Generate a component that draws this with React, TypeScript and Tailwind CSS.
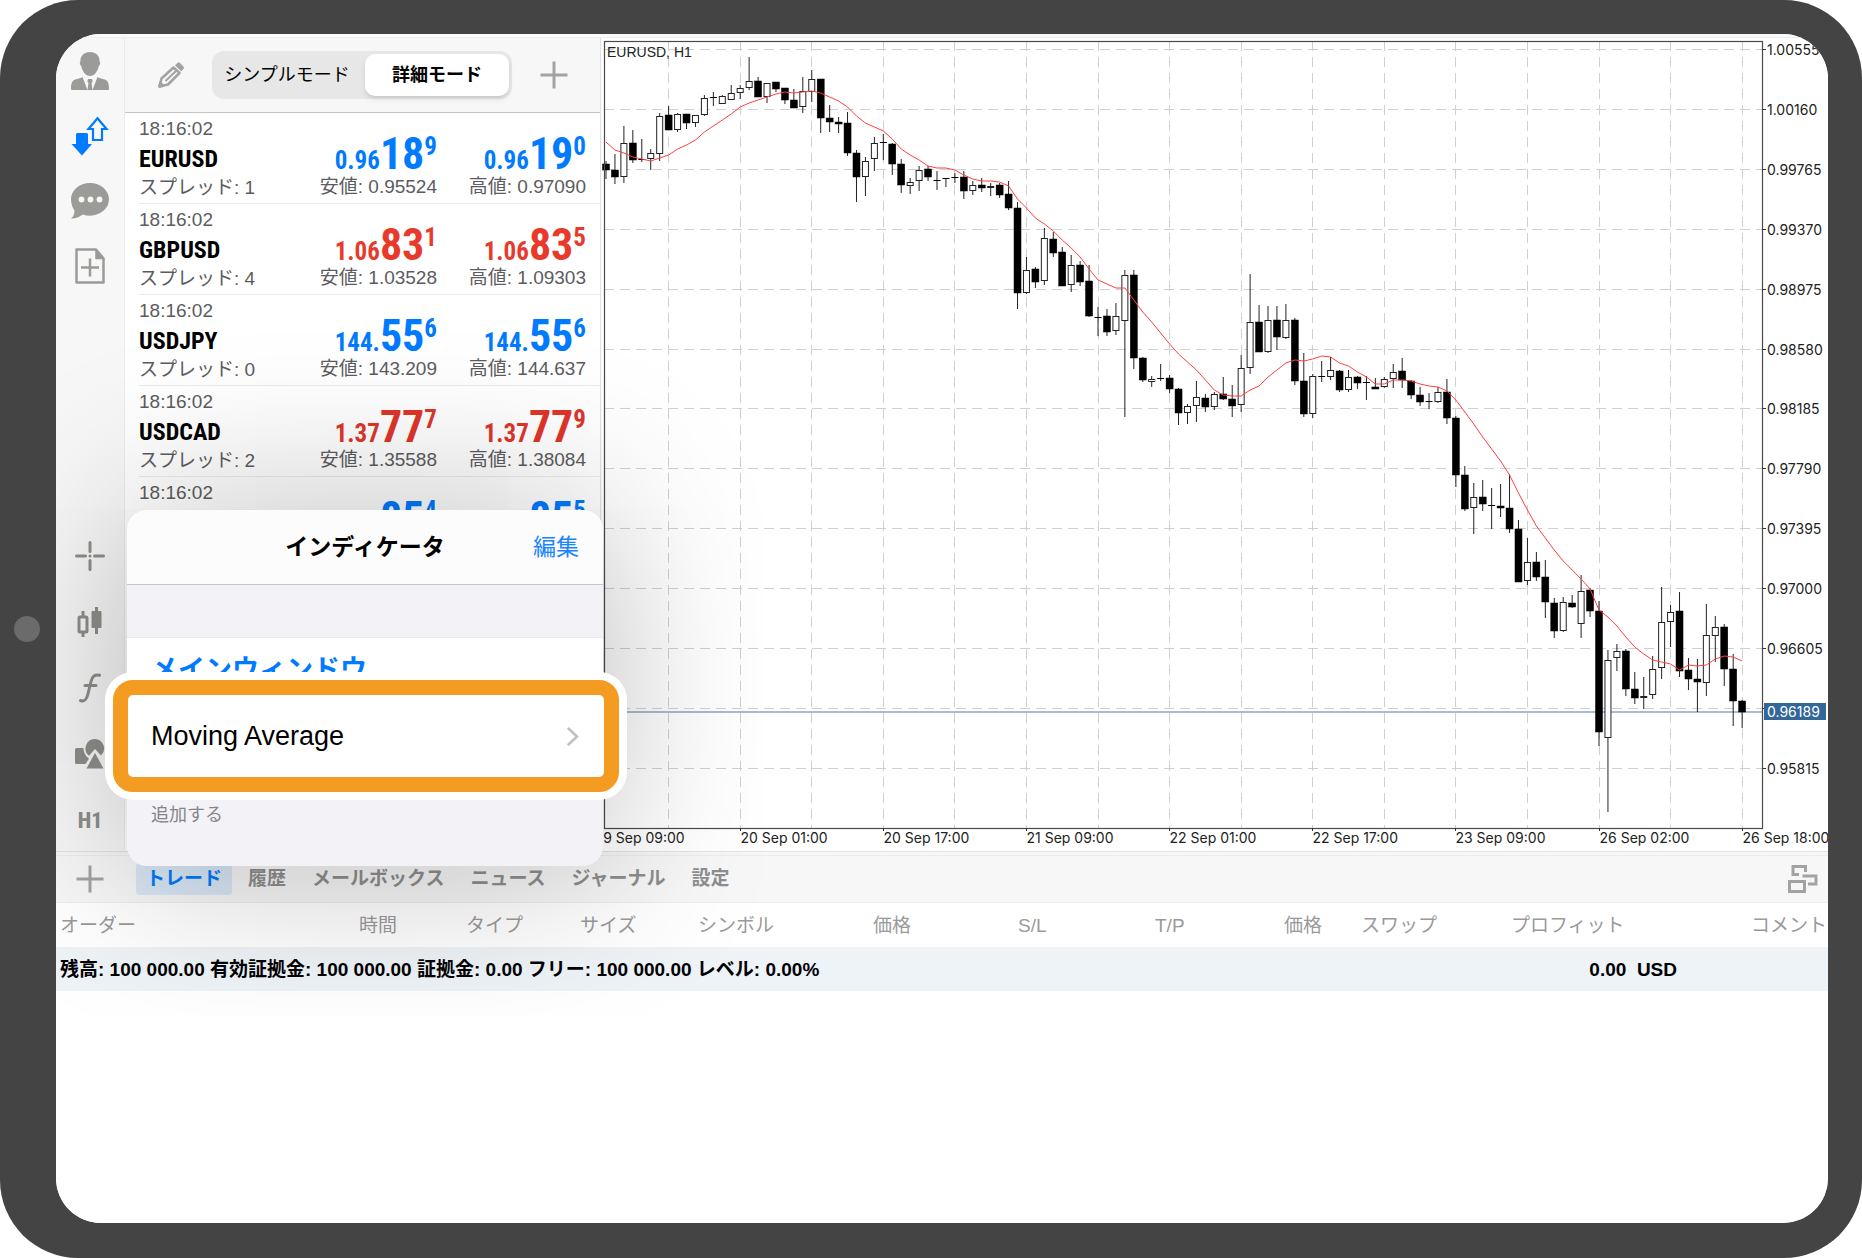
import type { ReactNode } from 'react';

type Candle = [high: number, top: number, bottom: number, low: number, up: number];

const STEP = 8.946;

// high, body top, body bottom, low, 1 = rising
const candles: Candle[] = [
  [120, 123, 129, 138, 0], [113, 129, 136, 143, 0], [85, 102, 136, 142, 1], [89, 102, 119, 122, 0],
  [98, 118, 119, 121, 0], [108, 112, 118, 129, 1], [72, 75, 113, 120, 1], [65, 74, 89, 89, 0],
  [72, 73, 89, 91, 1], [73, 73, 82, 88, 0], [74, 74, 82, 86, 1], [54, 57, 74, 75, 1],
  [51, 56, 57, 65, 0], [54, 55, 63, 63, 1], [44, 52, 59, 59, 1], [44, 47, 52, 58, 1],
  [16, 40, 47, 49, 1], [36, 40, 56, 56, 0], [42, 42, 56, 62, 1], [41, 41, 48, 51, 0],
  [47, 47, 59, 63, 0], [48, 59, 67, 67, 0], [36, 50, 66, 72, 1], [29, 38, 51, 61, 1],
  [38, 38, 77, 92, 0], [64, 77, 81, 91, 0], [76, 81, 83, 92, 0], [71, 82, 112, 115, 0],
  [109, 112, 136, 161, 0], [116, 120, 136, 155, 1], [96, 102, 118, 130, 1], [93, 101, 102, 119, 0],
  [102, 103, 123, 134, 0], [118, 123, 144, 152, 0], [137, 141, 145, 153, 1], [125, 129, 140, 150, 1],
  [125, 128, 136, 140, 0], [130, 139, 140, 149, 0], [137, 137, 138, 146, 0], [132, 136, 137, 142, 0],
  [130, 136, 150, 158, 0], [140, 144, 150, 154, 1], [137, 144, 147, 151, 0], [142, 145, 147, 155, 1],
  [142, 144, 154, 157, 0], [140, 153, 167, 169, 0], [161, 167, 252, 268, 0], [216, 229, 252, 253, 1],
  [226, 228, 241, 247, 0], [187, 197, 240, 244, 1], [191, 198, 212, 216, 0], [206, 211, 245, 245, 0],
  [214, 224, 244, 251, 1], [220, 224, 241, 245, 0], [224, 240, 275, 276, 0], [266, 276, 277, 295, 0],
  [268, 275, 291, 295, 0], [262, 275, 290, 294, 1], [229, 234, 280, 376, 1], [229, 234, 317, 328, 0],
  [316, 317, 339, 341, 0], [335, 338, 341, 346, 1], [323, 337, 338, 340, 0], [334, 337, 348, 352, 0],
  [347, 348, 372, 384, 0], [363, 365, 372, 383, 1], [340, 356, 365, 381, 1], [353, 357, 366, 371, 0],
  [351, 353, 366, 369, 1], [336, 353, 358, 359, 0], [344, 358, 365, 376, 0], [314, 327, 364, 371, 1],
  [233, 281, 327, 333, 1], [264, 281, 311, 311, 0], [265, 279, 311, 312, 1], [265, 279, 296, 309, 0],
  [263, 279, 297, 298, 1], [277, 279, 340, 344, 0], [312, 340, 373, 376, 0], [333, 335, 373, 377, 1],
  [320, 335, 336, 341, 0], [316, 329, 336, 339, 1], [329, 330, 349, 351, 0], [329, 336, 349, 351, 1],
  [335, 336, 342, 348, 0], [335, 341, 342, 359, 0], [337, 346, 348, 348, 0], [336, 338, 346, 347, 1],
  [323, 331, 338, 347, 1], [317, 330, 339, 347, 0], [339, 340, 354, 358, 0], [346, 354, 361, 365, 0],
  [352, 360, 361, 368, 0], [346, 351, 361, 362, 1], [338, 351, 377, 383, 0], [375, 377, 434, 446, 0],
  [425, 434, 468, 470, 0], [442, 456, 467, 493, 1], [439, 456, 463, 470, 0], [447, 464, 465, 488, 0],
  [443, 465, 467, 476, 0], [433, 467, 488, 492, 0], [479, 488, 541, 541, 0], [497, 521, 540, 544, 1],
  [511, 521, 536, 540, 0], [519, 536, 561, 577, 0], [557, 562, 590, 597, 0], [556, 561, 590, 591, 1],
  [554, 562, 566, 567, 0], [534, 550, 583, 597, 1], [547, 549, 570, 576, 0], [560, 570, 691, 705, 0],
  [609, 619, 697, 771, 1], [603, 610, 617, 630, 1], [608, 610, 648, 655, 0], [631, 648, 657, 663, 0],
  [636, 655, 657, 668, 1], [615, 628, 654, 658, 1], [546, 581, 627, 638, 1], [564, 571, 581, 606, 1],
  [551, 570, 630, 636, 0], [617, 629, 638, 649, 0], [618, 638, 641, 671, 0], [563, 594, 642, 655, 1],
  [575, 586, 595, 621, 1], [583, 586, 628, 645, 0], [613, 628, 660, 685, 0], [659, 660, 671, 687, 0],
];

const average = [
  101, 109, 112, 116, 118, 120, 117, 114, 108, 104, 99, 91, 85, 79, 73, 66,
  62, 59, 56, 53, 51, 52, 51, 50, 52, 56, 60, 66, 75, 82, 86, 90,
  98, 108, 114, 119, 125, 127, 127, 129, 134, 138, 140, 140, 141, 145, 158, 167,
  177, 183, 190, 199, 207, 216, 228, 239, 243, 247, 247, 259, 271, 281, 292, 303,
  313, 321, 329, 339, 349, 354, 355, 355, 349, 345, 336, 329, 322, 319, 320, 318,
  315, 316, 322, 325, 331, 336, 343, 343, 339, 339, 340, 343, 345, 346, 350, 359,
  371, 383, 396, 408, 420, 434, 452, 469, 485, 497, 509, 520, 529, 538, 548, 569,
  576, 585, 596, 606, 613, 619, 621, 623, 629, 624, 625, 624, 618, 615, 616, 620,
];

const priceLabels = [
  '1.00555', '1.00160', '0.99765', '0.99370', '0.98975', '0.98580', '0.98185',
  '0.97790', '0.97395', '0.97000', '0.96605', '', '0.95815',
];

const timeLabels = [
  '19 Sep 09:00', '20 Sep 01:00', '20 Sep 17:00', '21 Sep 09:00', '22 Sep 01:00',
  '22 Sep 17:00', '23 Sep 09:00', '26 Sep 02:00', '26 Sep 18:00',
];

const quotes = [
  { symbol: 'EURUSD', spread: 1, low: '0.95524', high: '0.97090', bid: ['0.96', '18', '9'], ask: ['0.96', '19', '0'], color: 'text-[#007aff]' },
  { symbol: 'GBPUSD', spread: 4, low: '1.03528', high: '1.09303', bid: ['1.06', '83', '1'], ask: ['1.06', '83', '5'], color: 'text-[#e8392a]' },
  { symbol: 'USDJPY', spread: 0, low: '143.209', high: '144.637', bid: ['144.', '55', '6'], ask: ['144.', '55', '6'], color: 'text-[#007aff]' },
  { symbol: 'USDCAD', spread: 2, low: '1.35588', high: '1.38084', bid: ['1.37', '77', '7'], ask: ['1.37', '77', '9'], color: 'text-[#e0352a]' },
  { symbol: 'EURGBP', spread: 1, low: '0.88412', high: '0.92685', bid: ['0.89', '85', '4'], ask: ['0.89', '85', '5'], color: 'text-[#007aff]' },
];

const tabs = ['トレード', '履歴', 'メールボックス', 'ニュース', 'ジャーナル', '設定'];

const columns = [
  { label: 'オーダー', width: 'w-[303px]' },
  { label: '時間', width: 'w-[107px]' },
  { label: 'タイプ', width: 'w-[114px]' },
  { label: 'サイズ', width: 'w-[118px]' },
  { label: 'シンボル', width: 'w-[175px]' },
  { label: '価格', width: 'w-[145px]' },
  { label: 'S/L', width: 'w-[137px]' },
  { label: 'T/P', width: 'w-[129px]' },
  { label: '価格', width: 'w-[77px]' },
  { label: 'スワップ', width: 'w-[150px]' },
  { label: 'プロフィット', width: 'w-[240px]' },
  { label: 'コメント', width: 'w-[77px]' },
];

function SideButton({ label, children }: { label: string; children: ReactNode }) {
  return (
    <button type="button" aria-label={label} className="flex items-center justify-center text-[#9b9b97]">
      {children}
    </button>
  );
}

function PlusIcon() {
  return (
    <svg width="28" height="28" viewBox="0 0 28 28" fill="none" stroke="currentColor" strokeWidth="3">
      <path d="M14 0.5v27M0.5 14h27" />
    </svg>
  );
}

function Sidebar() {
  return (
    <nav className="flex w-[69px] shrink-0 flex-col justify-between border-r border-[#ececec] bg-[#f7f7f7]">
      <div className="grid auto-rows-[65px]">
        <SideButton label="アカウント">
          <svg width="38" height="38" viewBox="0 0 38 38" fill="currentColor">
            <path d="M19 0c6 0 9.600 3.600 9.600 9.500 1 .5.700 3.500-.8 4.500-.8 5-4.500 10-8.800 10s-8-5-8.800-10c-1.500-1-1.800-4-.8-4.500C9.400 3.600 13 0 19 0z" />
            <path d="M11.500 25l5 13H1.500C.5 38 0 37.500 0 36.500c0-6 1.500-8 5-9.200 3-.9 5-1.100 6.500-2.300zM26.500 25l-5 13h15c1 0 1.500-.5 1.500-1.500 0-6-1.500-8-5-9.200-3-.9-5-1.100-6.500-2.300zM17 27h4l.7 2.500-1.200 1.500 1 7h-5l1-7-1.200-1.500z" />
          </svg>
        </SideButton>
        <SideButton label="気配値">
          <svg width="38" height="40" viewBox="0 0 38 40" className="text-[#007aff]">
            <path d="M26.500 2.200l9 10.800h-4.500v11h-9V13h-4.500z" fill="none" stroke="currentColor" strokeWidth="2.200" />
            <path d="M5 18.500q0-1.500 1.500-1.500h9q1.500 0 1.500 1.500V28h4L11 39.500 0.500 28H5z" fill="currentColor" />
          </svg>
        </SideButton>
        <SideButton label="メッセージ">
          <svg width="38" height="36" viewBox="0 0 38 36" fill="currentColor">
            <path d="M19 0c10.500 0 19 7.200 19 16.300s-8.500 16.400-19 16.400c-2.500 0-5-.4-7.200-1.200C9 34 4 35.700 0 35.500c2.500-2 3.500-4.500 3.500-8C1.300 24.500 0 20.500 0 16.300 0 7.200 8.500 0 19 0z" />
            <circle cx="10.500" cy="16.500" r="2.900" fill="#f7f7f7" />
            <circle cx="19.500" cy="16.500" r="2.900" fill="#f7f7f7" />
            <circle cx="28.500" cy="16.500" r="2.900" fill="#f7f7f7" />
          </svg>
        </SideButton>
        <SideButton label="新規注文">
          <svg width="30" height="36" viewBox="0 0 30 36" fill="none" stroke="currentColor" strokeWidth="2.500" strokeLinejoin="round">
            <path d="M1.500 1.500h19.500l7.500 9v24h-27z" />
            <path d="M21 1.500v9h7.500z" fill="currentColor" strokeWidth="1.500" />
            <path d="M15 10.500v18M6 19.500h18" />
          </svg>
        </SideButton>
      </div>
      <div className="-mb-0.5 grid auto-rows-[66px]">
        <SideButton label="クロスヘア">
          <svg width="30" height="30" viewBox="0 0 30 30" fill="none" stroke="#8e8e8a" strokeWidth="3" strokeLinecap="round">
            <path d="M15 1.500v9M15 19.500v9M1.500 15h9M19.500 15h9M15 15h.01" />
          </svg>
        </SideButton>
        <SideButton label="チャートの種類">
          <svg width="26" height="30" viewBox="0 0 26 30" fill="none" stroke="#8e8e8a" strokeWidth="3">
            <rect x="2" y="10" width="8" height="15" rx="1" />
            <path d="M6 4v6M6 25v5M19.500 0v27" />
            <rect x="14.500" y="4" width="10" height="17" rx="1" fill="#8e8e8a" stroke="none" />
          </svg>
        </SideButton>
        <SideButton label="インディケータ">
          <svg width="22" height="30" viewBox="0 0 22 30" fill="none" stroke="#8e8e8a" strokeWidth="3" strokeLinecap="round">
            <path d="M1.500 27.500c4 1.500 6.300-1.500 7.300-6L12 8.500c1.200-5 4-7.500 8.500-6.200M6 12.500h11" />
          </svg>
        </SideButton>
        <SideButton label="オブジェクト">
          <svg width="30" height="30" viewBox="0 0 30 30" fill="#8e8e8a">
            <path d="M1.500 9H8.500c0 4.500 2.500 8.500 5.500 10.500L10.500 25h-9Q0 25 0 23.500v-13Q0 9 1.500 9z" />
            <path d="M19.500 0a9.500 9.500 0 0 1 6.500 16.500L20 10l-6 6.800A9.500 9.500 0 0 1 19.500 0z" />
            <path d="M20 14l8.500 15.500h-17z" />
          </svg>
        </SideButton>
        <SideButton label="時間足">
          <span className="font-['Roboto_Condensed','Roboto',sans-serif] text-[22px] font-extrabold text-[#8e8e8a]">H1</span>
        </SideButton>
      </div>
    </nav>
  );
}

function Price({ parts, label, value, color }: { parts: string[]; label: string; value: string; color: string }) {
  return (
    <div className="flex w-[149px] flex-col justify-end text-right">
      <div className={`flex items-baseline justify-end font-['Roboto_Condensed','Roboto',sans-serif] font-bold ${color}`}>
        <span className="text-[25px] leading-6">{parts[0]}</span>
        <span className="text-[44px] leading-[42px]">{parts[1]}</span>
        <span className="self-start text-[25px] leading-7">{parts[2]}</span>
      </div>
      <div className="leading-6">{label}: {value}</div>
    </div>
  );
}

function QuotesPanel() {
  return (
    <section className="flex w-[476px] shrink-0 flex-col overflow-hidden border-r border-[#e0e0e0]">
      <div className="flex h-[75px] shrink-0 items-center border-b border-[#c4c4c4] bg-[#f7f7f7] pl-8 text-[#a3a3a3]">
        <button type="button" aria-label="編集">
          <svg width="28" height="28" viewBox="-1 -1 28 28" fill="none" stroke="currentColor" strokeWidth="2.600" strokeLinejoin="round">
            <path d="M15.500 5.500L3.500 16.500L1.500 24.500L10 22.500L21.500 11z" />
            <path d="M7.500 19L18.500 8.500" strokeWidth="2" />
            <path d="M1.500 24.500l.8-3.500 2.800 2.700z" fill="currentColor" />
            <path d="M17.500 3.200L20 1q.8-.7 1.600 0l3.700 4q.7.8 0 1.600L23.200 8.800z" fill="currentColor" strokeWidth="1" />
          </svg>
        </button>
        <div className="ml-[27px] flex h-12 items-center rounded-xl bg-[#e7e7e7] p-[3px] text-[18px] text-black">
          <button type="button" className="mr-1.5 w-36">シンプルモード</button>
          <button type="button" className="h-[42px] w-36 rounded-[10px] bg-white font-bold shadow-md">詳細モード</button>
        </div>
        <button type="button" aria-label="追加" className="ml-7"><PlusIcon /></button>
      </div>
      <ul className="pl-[14px] text-[19px] text-[#5c5c60]">
        {quotes.map((quote) => (
          <li key={quote.symbol} className="flex h-[91px] border-b border-[#ebebeb] pt-1 pr-[14px] pb-1">
            <div className="flex-1">
              <div className="leading-6">18:16:02</div>
              <div className="font-['Roboto_Condensed','Roboto',sans-serif] text-[24px] leading-9 font-bold text-black">
                {quote.symbol}
              </div>
              <div className="leading-[22px]">スプレッド: {quote.spread}</div>
            </div>
            <Price parts={quote.bid} label="安値" value={quote.low} color={quote.color} />
            <Price parts={quote.ask} label="高値" value={quote.high} color={quote.color} />
          </li>
        ))}
      </ul>
    </section>
  );
}

function Chart() {
  const candleX = (index: number) => 2 + index * STEP;
  const gridX = (index: number) => Math.floor(candleX(7 + index * 8)) + 0.5;
  const gridY = (index: number) => Math.round(8 + index * 59.9) + 0.5;

  return (
    <section className="min-w-0 flex-1 overflow-hidden bg-white">
      <svg width="1227" height="813" viewBox="-3 -3 1227 813" className="font-['Inter',sans-serif]">
        <g stroke="#d0d0d0" strokeDasharray="10 6">
          {Array.from({ length: 16 }, (_, i) => <path key={i} d={`M${gridX(i)} 0V787`} />)}
          {priceLabels.map((_, i) => <path key={i} d={`M0 ${gridY(i)}H1158`} />)}
        </g>
        <path d="M0 671H1158" stroke="#a9bbd0" strokeWidth="2" />
        {candles.map(([high, top, bottom, low, up], i) => {
          const x = candleX(i);
          return (
            <g key={i} stroke="#222">
              <path d={`M${x} ${high}V${low}`} />
              {up ? (
                <rect x={x - 3} y={top + 0.5} width="6" height={Math.max(bottom - top - 1, 1)} fill="#fff" />
              ) : (
                <rect x={x - 3.5} y={top} width="7" height={bottom - top} fill="#000" stroke={bottom - top > 1 ? '#000' : 'none'} strokeWidth="0.500" />
              )}
            </g>
          );
        })}
        <polyline
          fill="none"
          stroke="#ff4040"
          points={average.map((y, i) => `${candleX(i)},${y}`).join(' ')}
        />
        <rect x="0.500" y="0.500" width="1158" height="787" fill="none" stroke="#4a4a4a" strokeWidth="1.200" />
        <g fontSize="14" fill="#222">
          {priceLabels.map((label, i) => (
            <g key={i}>
              <path d={`M1158 ${gridY(i)}h4`} stroke="#333" />
              <text x="1163" y={gridY(i) + 5}>{label}</text>
            </g>
          ))}
          {timeLabels.map((label, i) => (
            <g key={label}>
              <path d={`M${gridX(i * 2 - 1)} 787v3`} stroke="#333" />
              <text x={gridX(i * 2 - 1)} y="802">{label}</text>
            </g>
          ))}
          <rect x="1160" y="662" width="62" height="17" fill="#336699" />
          <text x="1163" y="676" fill="#fff">0.96189</text>
        </g>
        <text x="3" y="16" fontSize="14" fill="#222" fontFamily="Liberation Sans">EURUSD, H1</text>
      </svg>
    </section>
  );
}

function TradePanel() {
  return (
    <section className="h-[372px] shrink-0 bg-white">
      <div className="h-1 border-t border-[#e2e2e2] bg-[#f7f7f7]" />
      <div className="flex h-12 items-center border-y border-[#ededed] bg-[#f7f7f7] text-[#a3a3a3]">
        <button type="button" aria-label="新規注文" className="ml-5"><PlusIcon /></button>
        <div className="ml-8 flex flex-1 gap-1.5 text-[19px] leading-8 font-bold text-[#8e8e8e]">
          {tabs.map((tab, index) => (
            <button key={tab} type="button" className={index === 0 ? 'rounded bg-[#d9e7f6] px-2.5 text-[#007aff]' : 'px-2.5'}>
              {tab}
            </button>
          ))}
        </div>
        <button type="button" aria-label="レイアウト" className="mr-2.5">
          <svg width="30" height="28" viewBox="0 0 30 28" fill="none" stroke="currentColor" strokeWidth="3">
            <path d="M11 9.500H5v-8h12.500V7" />
            <rect x="1.500" y="16.500" width="15" height="10" />
            <path d="M14.500 11h13.500v8h-8" />
          </svg>
        </button>
      </div>
      <table className="w-full table-fixed text-left text-[19px] whitespace-nowrap">
        <thead>
          <tr className="h-11 text-[#9a9a9a]">
            {columns.map((column, index) => (
              <th key={index} className={`${column.width} p-0 pt-0.5 font-normal first:pl-1`}>{column.label}</th>
            ))}
          </tr>
        </thead>
        <tbody>
          <tr className="h-11 bg-[#eef3f8] font-bold">
            <td colSpan={10} className="p-0 pt-0.5 pl-1">
              残高: 100 000.00 有効証拠金: 100 000.00 証拠金: 0.00 フリー: 100 000.00 レベル: 0.00%
            </td>
            <td className="pt-0.5 pr-[74px] text-right whitespace-pre">0.00  USD</td>
            <td />
          </tr>
        </tbody>
      </table>
    </section>
  );
}

function IndicatorPopover() {
  return (
    <div className="absolute top-[476px] left-[71px] w-[476px] rounded-[20px] bg-[#f2f2f7] shadow-[0_0_170px_rgba(0,0,0,0.28)]">
      <div className="grid h-[75px] grid-cols-[1fr_auto_1fr] items-center rounded-t-[20px] border-b border-[#c6c6c8] bg-[#fcfcfc] px-6 text-[23px]">
        <h2 className="col-start-2 font-bold">インディケータ</h2>
        <button type="button" className="justify-self-end text-[#1a84ff]">編集</button>
      </div>
      <div className="h-[53px] border-b border-[#e8e8ec]" />
      <h3 className="h-[57px] bg-white pl-6 text-[27px] leading-[64px] font-bold text-[#007aff]">メインウィンドウ</h3>
      <div className="relative h-[82px]">
        <div className="absolute -inset-y-[15px] -right-[16px] -left-[14px] rounded-[20px] border-[15px] border-[#f49b22] bg-white ring-8 ring-white" />
        <button type="button" className="relative flex h-full w-full items-center justify-between px-6 text-[27px]">
          Moving Average
          <svg width="12" height="19" viewBox="0 0 12 19" fill="none" stroke="#c0c0c4" strokeWidth="2.500" strokeLinecap="round">
            <path d="M1.500 1.500l8.500 8-8.500 8" />
          </svg>
        </button>
      </div>
      <button type="button" className="block h-[89px] px-6 pb-3 text-[18px] text-[#85858a]">追加する</button>
    </div>
  );
}

export default function App() {
  return (
    <div className="flex h-screen min-h-[1100px] overflow-hidden bg-white font-['Liberation_Sans','Noto_Sans_CJK_JP',sans-serif] text-black">
      <div className="relative flex flex-1 rounded-[78px] bg-[#444] pt-[34px] pr-[34px] pb-[35px] pl-14">
        <div className="absolute top-1/2 left-3.5 size-[26px] -translate-y-1/2 rounded-full bg-[#6b6b6b]" />
        <main className="relative flex min-w-0 flex-1 flex-col overflow-hidden rounded-[45px] bg-white">
          <div className="h-1 shrink-0 border-b border-[#eee] bg-[#fafafa]" />
          <div className="flex min-h-0 flex-1">
            <Sidebar />
            <QuotesPanel />
            <Chart />
          </div>
          <TradePanel />
          <IndicatorPopover />
        </main>
      </div>
    </div>
  );
}
